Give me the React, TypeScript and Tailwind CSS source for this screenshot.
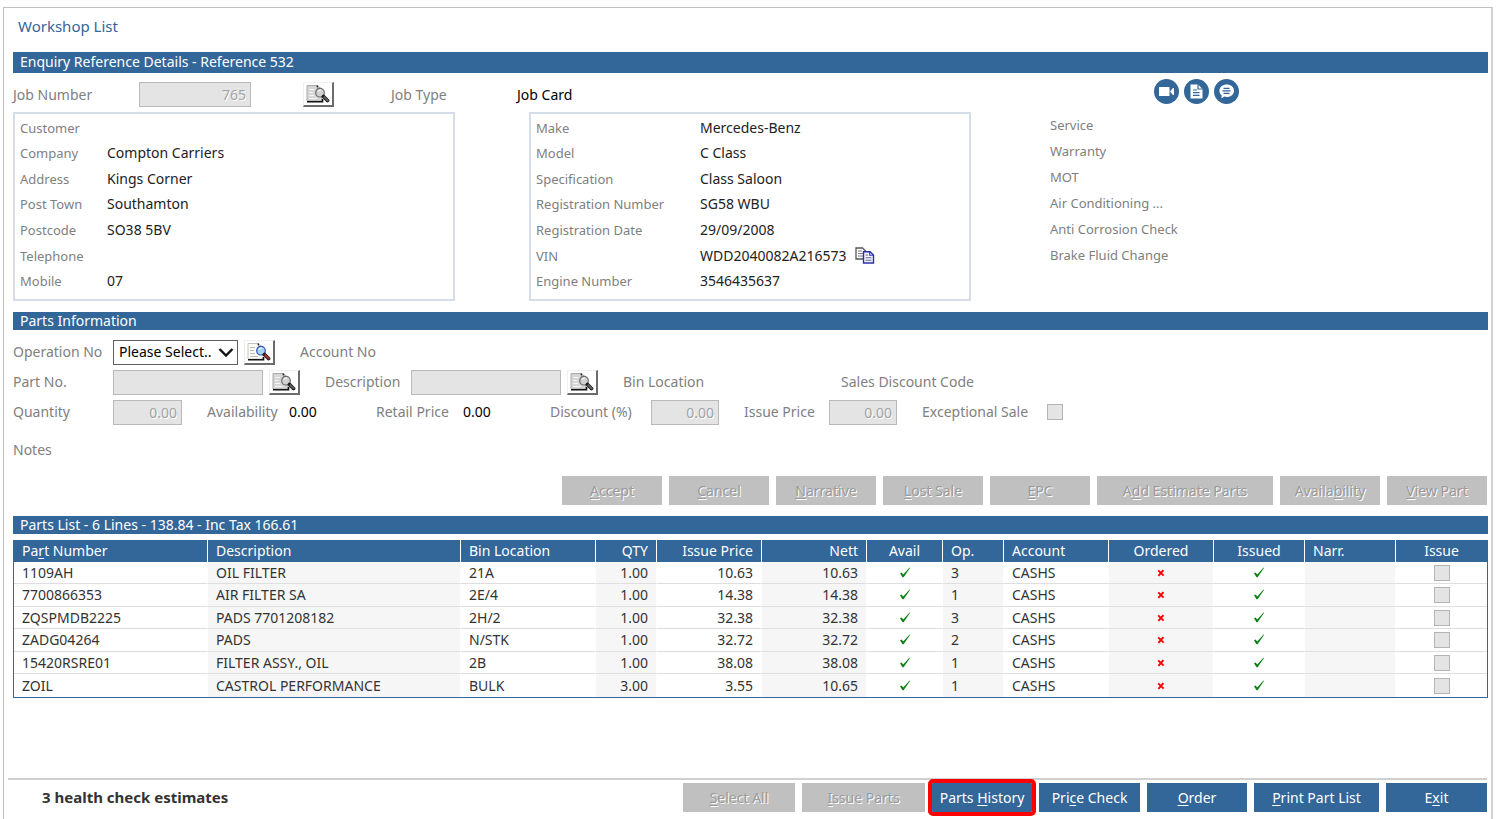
import React from "react";

const BAR = "flex items-center bg-[#336699] pb-px pl-[7px] text-[14px] leading-none text-white";
const LABEL = "shrink-0 text-[14px] leading-5 text-[#808080]";
const FIELD =
  "h-[25px] shrink-0 border border-[#b9b9b9] bg-[#e4e4e4] px-1 text-right text-[14px] text-[#a3a3a3] [text-shadow:1px_1px_0_#fff]";
const CHECK = "block size-4 appearance-none border border-[#b4b4b4] bg-[#e4e4e4]";

function SearchIcon({ color = false }: { color?: boolean }) {
  const lens = color ? "#a9d3f5" : "#d2d2d2";
  const rim = color ? "#2f55b5" : "#6c6c6c";
  const handle = color ? "#a8322c" : "#5c5c5c";
  return (
    <svg width="24" height="18" viewBox="0 0 24 18" aria-hidden="true">
      <path d="M1 0.5H11.5L16 4.5V16H1Z" fill={color ? "#fdfdf6" : "#d6d6d6"} stroke={color ? "#c4c4c4" : "#a9a9a9"} strokeWidth="1" />
      <path d="M1 16.7H16.5V14" fill="none" stroke="#111" strokeWidth="1.6" />
      <path d="M11 0.5L12 3.5L15.5 4.5" fill="none" stroke="#222" strokeWidth="1.4" strokeDasharray="2 1" />
      <path d="M3 4.5h5M3 7.5h4M3 10.5h5M3 13.5h8" stroke={color ? "#b9b9b9" : "#f4f4f4"} strokeWidth="1" />
      <circle cx="14" cy="7.7" r="4.3" fill={lens} stroke={rim} strokeWidth="1.2" />
      <path d="M12 6.5q1-1.8 3-1.4" fill="none" stroke="#fff" strokeWidth="1.1" />
      <path d="M17.500 11.500L21.500 15.500" stroke="#1c1c1c" strokeWidth="3.800" strokeLinecap="round" />
      <path d="M18.4 12.2L21.6 15.2" stroke={handle} strokeWidth="2.2" strokeLinecap="round" />
    </svg>
  );
}

function SearchButton({ label, color }: { label: string; color?: boolean }) {
  return (
    <button
      type="button"
      aria-label={label}
      className="flex h-[25px] w-[31px] shrink-0 items-center justify-center border border-r-2 border-b-2 border-[#efefef] border-r-[#6b6b6b] border-b-[#6b6b6b] bg-white"
    >
      <SearchIcon color={color} />
    </button>
  );
}

function CopyIcon() {
  return (
    <svg width="20" height="17" viewBox="0 0 20 17" aria-hidden="true">
      <path d="M1 1H7.5L10.5 4V12H1Z" fill="#fff" stroke="#555" strokeWidth="1.3" />
      <path d="M3 4h4M3 6.5h5M3 9h5" stroke="#777" strokeWidth="1.1" />
      <path d="M8.5 4.7H15L18.5 8V16H8.5Z" fill="#f3f3ff" stroke="#2f2fae" strokeWidth="1.4" />
      <path d="M14.7 4.7V8.2H18.5" fill="none" stroke="#2f2fae" strokeWidth="1.1" />
      <path d="M10.5 8h2.5M10.5 10.7h6M10.5 13.3h6" stroke="#6b6b8a" strokeWidth="1.1" />
    </svg>
  );
}

function CircleButton({ label, children }: { label: string; children: React.ReactNode }) {
  return (
    <button type="button" aria-label={label} className="size-[25px] rounded-full bg-[#336699]">
      <svg width="25" height="25" viewBox="0 0 25 25" aria-hidden="true">
        {children}
      </svg>
    </button>
  );
}

function Keyed({ text, at }: { text: string; at: number }) {
  return (
    <>
      {text.slice(0, at)}
      <span className="underline underline-offset-2">{text[at]}</span>
      {text.slice(at + 1)}
    </>
  );
}

function ActionButton({ text, at, width, disabled, marked }: { text: string; at: number; width: string; disabled?: boolean; marked?: boolean }) {
  const tone = disabled ? "bg-[#c0c0c0] text-[#9a9a9a] [text-shadow:1px_1px_0_#fff]" : "bg-[#336699] text-white";
  const mark = marked ? "rounded-[1px] outline-4 outline-offset-0 outline-[#fe0000]" : "";
  return (
    <button type="button" disabled={disabled} className={`h-[29px] shrink-0 whitespace-nowrap text-[14px] leading-none ${width} ${tone} ${mark}`}>
      <Keyed text={text} at={at} />
    </button>
  );
}

const customer = [
  ["Customer", ""],
  ["Company", "Compton Carriers"],
  ["Address", "Kings Corner"],
  ["Post Town", "Southamton"],
  ["Postcode", "SO38 5BV"],
  ["Telephone", ""],
  ["Mobile", "07"],
];

const vehicle = [
  ["Make", "Mercedes-Benz"],
  ["Model", "C Class"],
  ["Specification", "Class Saloon"],
  ["Registration Number", "SG58 WBU"],
  ["Registration Date", "29/09/2008"],
  ["VIN", "WDD2040082A216573"],
  ["Engine Number", "3546435637"],
];

const reminders = ["Service", "Warranty", "MOT", "Air Conditioning ...", "Anti Corrosion Check", "Brake Fluid Change"];

function DetailBox({ rows, labelWidth }: { rows: string[][]; labelWidth: string }) {
  return (
    <dl className="grid min-h-[189px] auto-rows-fr border-2 border-[#d5dde8] pt-px pb-[5px] pl-[5px]">
      {rows.map(([name, value]) => (
        <div key={name} className="flex items-center">
          <dt className={`text-[13px] leading-5 text-[#808080] ${labelWidth}`}>{name}</dt>
          <dd className="flex items-center gap-2 text-[14px] leading-5 text-[#222]">
            {value}
            {name === "VIN" && (
              <button type="button" aria-label="Copy VIN">
                <CopyIcon />
              </button>
            )}
          </dd>
        </div>
      ))}
    </dl>
  );
}

const columns = [
  { name: "Part Number", col: "w-[193px]", align: "text-left" },
  { name: "Description", col: "w-[253px]", align: "text-left" },
  { name: "Bin Location", col: "w-[135px]", align: "text-left" },
  { name: "QTY", col: "w-[61px]", align: "text-right" },
  { name: "Issue Price", col: "w-[105px]", align: "text-right" },
  { name: "Nett", col: "w-[105px]", align: "text-right" },
  { name: "Avail", col: "w-[76px]", align: "text-center" },
  { name: "Op.", col: "w-[61px]", align: "text-left" },
  { name: "Account", col: "w-[105px]", align: "text-left" },
  { name: "Ordered", col: "w-[105px]", align: "text-center" },
  { name: "Issued", col: "w-[91px]", align: "text-center" },
  { name: "Narr.", col: "w-[91px]", align: "text-left" },
  { name: "Issue", col: "w-[92px]", align: "text-center" },
];

const parts = [
  ["1109AH", "OIL FILTER", "21A", "1.00", "10.63", "10.63", "3"],
  ["7700866353", "AIR FILTER SA", "2E/4", "1.00", "14.38", "14.38", "1"],
  ["ZQSPMDB2225", "PADS 7701208182", "2H/2", "1.00", "32.38", "32.38", "3"],
  ["ZADG04264", "PADS", "N/STK", "1.00", "32.72", "32.72", "2"],
  ["15420RSRE01", "FILTER ASSY., OIL", "2B", "1.00", "38.08", "38.08", "1"],
  ["ZOIL", "CASTROL PERFORMANCE", "BULK", "3.00", "3.55", "10.65", "1"],
];

function Tick() {
  return (
    <svg className="mx-auto block" width="12" height="12" viewBox="0 0 12 12" role="img" aria-label="Yes">
      <path d="M1 6.200L2.600 5.600L4.200 7.500L10.600 0.500L11 0.900L4.600 10.200H3.500Z" fill="#0b8012" />
    </svg>
  );
}

function Cross() {
  return (
    <svg className="mx-auto block" width="8" height="8" viewBox="0 0 8 8" role="img" aria-label="No">
      <path d="M1.2 1.4L6.6 6.6M6.4 1.2L1.4 6.8" stroke="#f00" strokeWidth="2" />
    </svg>
  );
}

export default function App() {
  return (
    <div className="flex min-h-screen flex-col bg-white pt-[7px] pr-[3px] pl-[3px] font-['Noto_Sans',sans-serif] text-[#333]">
      <main className="flex flex-1 flex-col border-t border-r-2 border-l border-t-[#c0c0c0] border-r-[#d2d2d2] border-l-[#c0c0c0]">
        <div className="flex flex-1 flex-col pr-[3px] pl-[9px]">
          <h1 className="h-11 pt-2 pl-[5px] text-[15px] leading-5 text-[#336699]">Workshop List</h1>

          <h2 className={`h-[21px] ${BAR}`}>Enquiry Reference Details - Reference 532</h2>

          <div className="flex h-[39px] items-center pt-1">
            <label htmlFor="job" className={`w-[126px] ${LABEL}`}>Job Number</label>
            <input id="job" disabled defaultValue="765" className={`w-28 ${FIELD}`} />
            <div className="ml-[52px]">
              <SearchButton label="Find job" />
            </div>
            <span className={`ml-[57px] w-[126px] ${LABEL}`}>Job Type</span>
            <span className="flex-1 text-[14px] leading-5 text-black">Job Card</span>
            <div className="mt-0.5 flex w-[334px] gap-[5px] self-start">
              <CircleButton label="Video">
                <path d="M5 8h10.5v9H5Z" fill="#fff" />
                <path d="M16.500 12.500L19.500 9V16Z" fill="#fff" stroke="#fff" />
              </CircleButton>
              <CircleButton label="Document">
                <path d="M6.5 5.5H14L18.5 10V19.5H6.5Z" fill="#fff" />
                <path d="M14 5.5V10H18.5M9 11h4M9 13.7h6.5M9 16.4h6.5" fill="none" stroke="#336699" strokeWidth="1.2" />
              </CircleButton>
              <CircleButton label="Messages">
                <path d="M12.8 5.5C17 5.5 20 8.2 20 11.7S17 18 12.8 18C11.8 18 10.9 17.8 10.2 17.6L7.5 19.5L7.7 16.3C6.2 15.2 5.4 13.6 5.4 11.7C5.4 8.2 8.6 5.5 12.8 5.5Z" fill="#fff" />
                <path d="M9.5 9.3h6M8.5 11.8h8M9.5 14.3h6" stroke="#336699" strokeWidth="1.2" />
              </CircleButton>
            </div>
          </div>

          <div className="grid grid-cols-[442fr_442fr_443fr] gap-x-[74px]">
            <DetailBox rows={customer} labelWidth="w-[87px]" />
            <DetailBox rows={vehicle} labelWidth="w-[164px]" />
            <ul className="pl-[5px]">
              {reminders.map((name) => (
                <li key={name} className="text-[13px] leading-[26px] text-[#808080]">{name}</li>
              ))}
            </ul>
          </div>

          <h2 className={`mt-[11px] h-[18px] ${BAR}`}>Parts Information</h2>

          <div className="mt-[7px]">
            <div className="flex h-[30px] items-center">
              <label htmlFor="operation" className={`w-[100px] ${LABEL}`}>Operation No</label>
              <div className="relative mr-[6px]">
                <select id="operation" className="block h-[25px] w-[125px] appearance-none border border-[#5f5f5f] bg-white pr-6 pl-[5px] text-[14px] leading-none text-black">
                  <option>Please Select..</option>
                </select>
                <svg className="pointer-events-none absolute top-[7px] right-1" width="16" height="11" viewBox="0 0 16 11" aria-hidden="true">
                  <path d="M1.5 2L8 8.5L14.5 2" fill="none" stroke="#111" strokeWidth="2.4" />
                </svg>
              </div>
              <SearchButton label="Find operation" color />
              <span className={`ml-[25px] ${LABEL}`}>Account No</span>
            </div>
            <div className="flex h-[30px] items-center">
              <label htmlFor="part" className={`w-[100px] ${LABEL}`}>Part No.</label>
              <input id="part" disabled className={`mr-[6px] w-[150px] ${FIELD}`} />
              <SearchButton label="Find part" />
              <label htmlFor="description" className={`ml-[25px] w-[86px] ${LABEL}`}>Description</label>
              <input id="description" disabled className={`mr-[6px] w-[150px] ${FIELD}`} />
              <SearchButton label="Find description" />
              <span className={`ml-[25px] w-[218px] ${LABEL}`}>Bin Location</span>
              <span className={LABEL}>Sales Discount Code</span>
            </div>
            <div className="flex h-[30px] items-center">
              <label htmlFor="quantity" className={`w-[100px] ${LABEL}`}>Quantity</label>
              <input id="quantity" disabled defaultValue="0.00" className={`mr-[25px] w-[69px] ${FIELD}`} />
              <span className={`w-[82px] ${LABEL}`}>Availability</span>
              <span className="w-[87px] text-[14px] leading-5 text-black">0.00</span>
              <span className={`w-[87px] ${LABEL}`}>Retail Price</span>
              <span className="w-[87px] text-[14px] leading-5 text-black">0.00</span>
              <label htmlFor="discount" className={`w-[101px] ${LABEL}`}>Discount (%)</label>
              <input id="discount" disabled defaultValue="0.00" className={`mr-[25px] w-[68px] ${FIELD}`} />
              <label htmlFor="price" className={`w-[85px] ${LABEL}`}>Issue Price</label>
              <input id="price" disabled defaultValue="0.00" className={`mr-[25px] w-[68px] ${FIELD}`} />
              <label htmlFor="exceptional" className={`w-[125px] ${LABEL}`}>Exceptional Sale</label>
              <input id="exceptional" type="checkbox" disabled className={CHECK} />
            </div>
            <p className="text-[14px] leading-[46px] text-[#808080]">Notes</p>
          </div>

          <div className="mt-[3px] flex justify-end gap-[7px] pr-px">
            <ActionButton text="Accept" at={0} width="w-[100px]" disabled />
            <ActionButton text="Cancel" at={0} width="w-[100px]" disabled />
            <ActionButton text="Narrative" at={0} width="w-[100px]" disabled />
            <ActionButton text="Lost Sale" at={0} width="w-[100px]" disabled />
            <ActionButton text="EPC" at={0} width="w-[100px]" disabled />
            <ActionButton text="Add Estimate Parts" at={1} width="w-[176px]" disabled />
            <ActionButton text="Availability" at={6} width="w-[100px]" disabled />
            <ActionButton text="View Part" at={0} width="w-[100px]" disabled />
          </div>

          <h2 className={`mt-[11px] h-[18px] ${BAR}`}>Parts List - 6 Lines - 138.84 - Inc Tax 166.61</h2>

          <div className="mt-[6px] border-x border-b border-[#336699]">
            <table className="w-full table-fixed border-separate border-spacing-0 text-[14px] leading-5">
              <colgroup>
                {columns.map((c) => (
                  <col key={c.name} className={c.col} />
                ))}
              </colgroup>
              <thead>
                <tr className="h-[22px] bg-[#336699] text-white">
                  {columns.map((c, i) => (
                    <th key={c.name} className={`px-2 py-0 font-normal ${c.align} ${i ? "border-l border-white" : ""}`}>
                      {i === 0 ? <Keyed text={c.name} at={2} /> : c.name}
                    </th>
                  ))}
                </tr>
              </thead>
              <tbody>
                {parts.map((p, r) => {
                  const cells: React.ReactNode[] = [
                    ...p.slice(0, 6),
                    <Tick />,
                    p[6],
                    "CASHS",
                    <Cross />,
                    <Tick />,
                    "",
                    <input type="checkbox" disabled aria-label={`Issue ${p[0]}`} className={`mx-auto ${CHECK}`} />,
                  ];
                  return (
                    <tr key={p[0]} className="h-[22px] even:h-[23px]">
                      {cells.map((cell, i) => (
                        <td
                          key={columns[i].name}
                          className={`px-2 py-0 ${columns[i].align} ${i ? "border-l border-l-white" : ""} ${i % 2 ? "bg-[#f6f6f6]" : "bg-white"} ${r < parts.length - 1 ? "border-b border-b-[#dedede]" : ""}`}
                        >
                          {cell}
                        </td>
                      ))}
                    </tr>
                  );
                })}
              </tbody>
            </table>
          </div>
        </div>

        <footer className="mr-1 ml-1 flex h-[41px] items-start border-t-2 border-[#d0d0d0] pt-[3px]">
          <p className="flex-1 pl-[34px] text-[15px] leading-[29px] font-bold text-[#333]">3 health check estimates</p>
          <div className="flex gap-[7px]">
            <ActionButton text="Select All" at={0} width="w-[112px]" disabled />
            <ActionButton text="Issue Parts" at={0} width="w-[123px]" disabled />
            <ActionButton text="Parts History" at={6} width="w-[100px]" marked />
            <ActionButton text="Price Check" at={3} width="w-[101px]" />
            <ActionButton text="Order" at={0} width="w-[100px]" />
            <ActionButton text="Print Part List" at={0} width="w-[125px]" />
            <ActionButton text="Exit" at={1} width="w-[101px]" />
          </div>
        </footer>
      </main>
    </div>
  );
}
